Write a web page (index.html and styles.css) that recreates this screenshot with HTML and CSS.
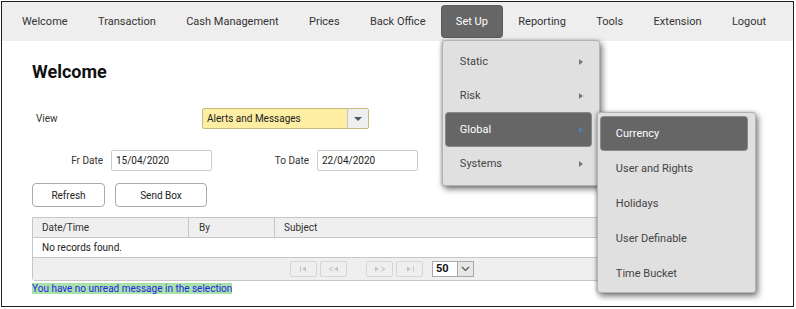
FILE: index.html
```html
<!DOCTYPE html>
<html>
<head>
<meta charset="utf-8">
<link rel="stylesheet" href="styles.css">
</head>
<body>
<div class="frame">
  <nav class="nav">
    <div class="nav-item">Welcome</div>
    <div class="nav-item">Transaction</div>
    <div class="nav-item">Cash Management</div>
    <div class="nav-item">Prices</div>
    <div class="nav-item">Back Office</div>
    <div class="nav-item active">Set Up
      <div class="menu menu-main">
        <div class="menu-item">Static<span class="arrow"></span></div>
        <div class="menu-item">Risk<span class="arrow"></span></div>
        <div class="menu-item selected">Global<span class="arrow"></span>
          <div class="menu menu-sub">
            <div class="menu-item selected">Currency</div>
            <div class="menu-item">User and Rights</div>
            <div class="menu-item">Holidays</div>
            <div class="menu-item">User Definable</div>
            <div class="menu-item">Time Bucket</div>
          </div>
        </div>
        <div class="menu-item">Systems<span class="arrow"></span></div>
      </div>
    </div>
    <div class="nav-item">Reporting</div>
    <div class="nav-item">Tools</div>
    <div class="nav-item">Extension</div>
    <div class="nav-item">Logout</div>
  </nav>

  <main class="main">
    <h1 class="title">Welcome</h1>

    <div class="view-row">
      <label class="view-label">View</label>
      <div class="select">
        <span class="select-text">Alerts and Messages</span>
        <span class="select-btn"><span class="caret"></span></span>
      </div>
    </div>

    <div class="date-row">
      <label class="date-label fr">Fr Date</label>
      <div class="input">15/04/2020</div>
      <label class="date-label to">To Date</label>
      <div class="input">22/04/2020</div>
    </div>

    <div class="btn-row">
      <button class="btn refresh">Refresh</button>
      <button class="btn sendbox">Send Box</button>
    </div>

    <div class="table">
      <div class="thead">
        <div class="th c1">Date/Time</div>
        <div class="th c2">By</div>
        <div class="th c3">Subject</div>
      </div>
      <div class="trow">No records found.</div>
      <div class="tfoot">
        <span class="pbtn"><svg width="10" height="6" viewBox="0 0 10 6"><rect x="1" y="0.5" width="1" height="5" fill="#c4c4c4"/><path d="M3 3 L7 0.5 L7 5.5 Z" fill="#c4c4c4"/></svg></span>
        <span class="pbtn"><svg width="12" height="6" viewBox="0 0 12 6"><path d="M1 3 L5 1 M1 3 L5 5" stroke="#c4c4c4" stroke-width="1" fill="none"/><path d="M6 3 L10 0.5 L10 5.5 Z" fill="#c4c4c4"/></svg></span>
        <span class="pgap"></span>
        <span class="pbtn"><svg width="12" height="6" viewBox="0 0 12 6"><path d="M1 0.5 L5 3 L1 5.5 Z" fill="#c4c4c4"/><path d="M11 3 L7 1 M11 3 L7 5" stroke="#c4c4c4" stroke-width="1" fill="none"/></svg></span>
        <span class="pbtn"><svg width="10" height="6" viewBox="0 0 10 6"><path d="M2 0.5 L6 3 L2 5.5 Z" fill="#c4c4c4"/><rect x="8" y="0.5" width="1" height="5" fill="#c4c4c4"/></svg></span>
        <span class="psel"><span class="psel-val">50</span><span class="psel-btn"><svg width="9" height="6" viewBox="0 0 9 6"><path d="M1 1 L4.5 4.5 L8 1" stroke="#555" stroke-width="1.2" fill="none"/></svg></span></span>
      </div>
    </div>
    <div class="msg"><span class="msg-text">You have no unread message in the selection</span></div>
  </main>
</div>
</body>
</html>
```

FILE: styles.css
```css
* { box-sizing: border-box; }
html, body { margin: 0; padding: 0; background: #fff; }
body { font-family: Roboto, "Liberation Sans", sans-serif; color: #333; }

.frame {
  margin: 1px;
  width: 793px;
  height: 306px;
  border: 1px solid #1e1e1e;
  position: relative;
  background: #fff;
}

.nav {
  display: flex;
  align-items: center;
  gap: 2.4px;
  height: 39px;
  padding-left: 6px;
  background: #eeeeee;
  font-size: 11px;
  color: #333;
}
.nav-item {
  position: relative;
  height: 31px;
  line-height: 31px;
  padding: 0 14px;
  border-radius: 3px;
  white-space: nowrap;
}
.nav-item.active {
  background: #666666;
  color: #fff;
  box-shadow: 0 0 0 1px #5a5a5a;
}

.menu {
  position: absolute;
  background: #e0e0e0;
  border: 1px solid #b4b4b4;
  border-radius: 3px;
  box-shadow: 2px 3px 6px rgba(0,0,0,0.55), -1px 0 3px rgba(0,0,0,0.2);
  color: #444;
  font-size: 11px;
  z-index: 10;
}
.menu-main {
  left: 0;
  top: 34px;
  width: 158px;
  padding: 3px 8px 5px 3px;
}
.menu-sub {
  left: 151px;
  top: -1px;
  width: 159px;
  padding: 2px 8px 2px 3px;
  z-index: 20;
}
.menu-item {
  position: relative;
  height: 33px;
  line-height: 33px;
  margin-top: 1px;
  padding-left: 14px;
  border-radius: 3px;
  color: #444;
}
.menu-sub .menu-item {
  margin-top: 2px;
  padding-left: 15px;
}
.menu-item.selected {
  background: #666666;
  color: #fff;
  box-shadow: 0 0 0 1px #8a8a8a;
}
.menu-sub .menu-item:not(.selected) { color: #444; }
.arrow {
  position: absolute;
  right: 8px;
  top: 14px;
  width: 0;
  height: 0;
  border-top: 3px solid transparent;
  border-bottom: 3px solid transparent;
  border-left: 4px solid #777;
}
.menu-item.selected > .arrow { border-left-color: #4c82b8; }

.main {
  padding-left: 30px;
}
.title {
  margin: 20px 0 0 0;
  height: 22px;
  line-height: 22px;
  font-size: 18px;
  font-weight: 700;
  color: #111;
}

.view-row {
  display: flex;
  align-items: center;
  margin-top: 25px;
  height: 21px;
  font-size: 10px;
}
.view-label {
  width: 170px;
  padding-left: 4px;
}
.select {
  display: flex;
  width: 167px;
  height: 21px;
  border: 1px solid #c9b97a;
  border-radius: 2px;
  background: #fdeea3;
  overflow: hidden;
}
.select-text {
  flex: 1;
  line-height: 19px;
  padding-left: 4px;
  color: #222;
}
.select-btn {
  width: 21px;
  background: #efefef;
  border-left: 1px solid #c8c8c8;
  display: flex;
  align-items: center;
  justify-content: center;
}
.caret {
  width: 0; height: 0;
  border-left: 4px solid transparent;
  border-right: 4px solid transparent;
  border-top: 4px solid #4a5a6a;
}

.date-row {
  display: flex;
  align-items: center;
  margin-top: 21px;
  height: 21px;
  font-size: 10px;
}
.date-label { text-align: right; padding-right: 8px; }
.date-label.fr { width: 79px; }
.date-label.to { width: 105px; }
.input {
  width: 101px;
  height: 21px;
  line-height: 19px;
  border: 1px solid #cccccc;
  border-radius: 2px;
  padding-left: 4px;
  color: #222;
  background: #fff;
}

.btn-row {
  display: flex;
  gap: 10px;
  margin-top: 12px;
}
.btn {
  height: 24px;
  border: 1px solid #aaaaaa;
  border-radius: 4px;
  background: #fff;
  font-family: Roboto, "Liberation Sans", sans-serif;
  font-size: 10px;
  color: #222;
  padding: 0;
}
.btn.refresh { width: 73px; }
.btn.sendbox { width: 92px; }

.table {
  margin-top: 10px;
  width: 700px;
  border: 1px solid #c6c6c6;
  border-radius: 0 0 3px 3px;
  font-size: 10px;
}
.thead {
  display: flex;
  height: 20px;
  background: #efefef;
  border-bottom: 1px solid #c6c6c6;
}
.th {
  line-height: 19px;
  padding-left: 9px;
  color: #333;
}
.th.c1 { width: 156px; border-right: 1px solid #c6c6c6; }
.th.c2 { width: 86px; border-right: 1px solid #c6c6c6; padding-left: 10px; }
.th.c3 { flex: 1; }
.trow {
  height: 20px;
  line-height: 20px;
  padding-left: 9px;
  border-bottom: 1px solid #c6c6c6;
  color: #222;
}
.tfoot {
  display: flex;
  align-items: center;
  height: 22px;
  background: #efefef;
  padding-left: 257px;
  gap: 3px;
}
.pbtn {
  width: 27px;
  height: 16px;
  border: 1px solid #d6d6d6;
  border-radius: 2px;
  background: #efefef;
  display: flex;
  align-items: center;
  justify-content: center;
}
.pgap { width: 13px; }
.psel {
  margin-left: 6px;
  width: 42px;
  height: 16px;
  display: flex;
  border: 1px solid #aaa;
  background: #fff;
}
.psel-val {
  flex: 1;
  font-weight: 700;
  font-size: 11px;
  line-height: 14px;
  padding-left: 3px;
  color: #111;
}
.psel-btn {
  width: 16px;
  background: #e6e6e6;
  border-left: 1px solid #aaa;
  display: flex;
  align-items: center;
  justify-content: center;
}

.msg {
  margin-top: 2px;
  font-size: 10px;
  line-height: 12px;
}
.msg-text {
  background: #a9e2a9;
  color: #2323e6;
}
```
